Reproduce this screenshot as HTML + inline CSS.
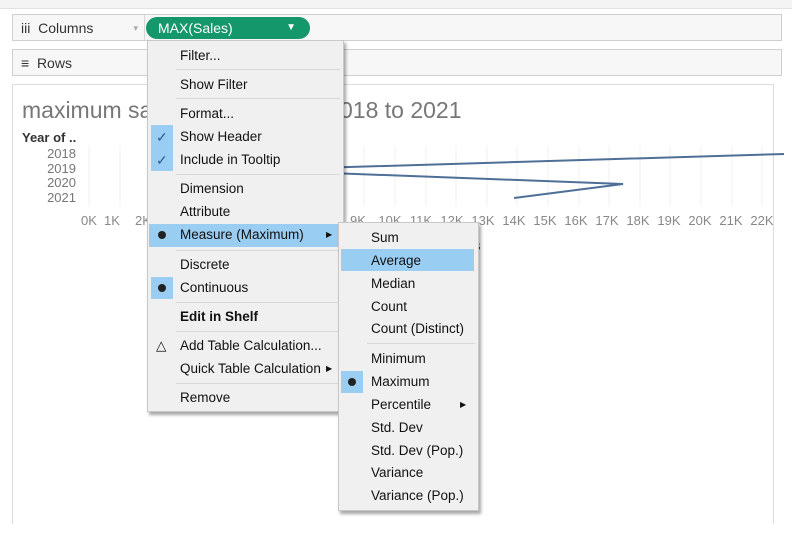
<!DOCTYPE html>
<html><head><style>
body{margin:0;width:792px;height:540px;background:#fff;position:relative;overflow:hidden;font-family:"Liberation Sans",sans-serif;}
.abs{position:absolute}
.shelf{position:absolute;left:12px;width:770px;height:27px;background:#f7f7f7;border:1px solid #cfcfcf;box-sizing:border-box}
.lbl{position:absolute;left:0;top:0;width:132px;height:100%;border-right:1px solid #d8d8d8;font-size:14px;color:#333;line-height:26px;padding-left:8px;box-sizing:border-box}
.menu{position:absolute;background:#f0f0f0;border:1px solid #c8c8c8;box-shadow:2px 3px 3px rgba(0,0,0,.35);font-size:13.5px;color:#111}
.it{position:absolute;left:0;right:0;height:22px;line-height:22px}
.sep{position:absolute;height:1px;background:#d8d8d8}
.ax{position:absolute;top:213px;width:34px;margin-left:-17px;text-align:center;font-size:13px;color:#888}
</style></head><body>
<div class="abs" style="left:0;top:0;width:792px;height:8px;background:#f4f4f4;border-bottom:1px solid #e2e2e2"></div>
<div class="shelf" style="top:14px"><div class="lbl">iii&nbsp; Columns<span style="position:absolute;right:6px;color:#aaa;font-size:9px">▾</span></div></div>
<div class="shelf" style="top:49px"><div class="lbl" style="border-right:none">≡&nbsp; Rows</div></div>
<div class="abs" style="left:146px;top:17px;width:164px;height:22px;border-radius:11px;background:#14976a;color:#fff;font-size:14px;line-height:22px;padding-left:12px;box-sizing:border-box">MAX(Sales)<span style="position:absolute;right:14px;font-size:10px">▼</span></div>
<div class="abs" style="left:12px;top:84px;width:762px;height:440px;border:1px solid #ddd;border-bottom:none;box-sizing:border-box"></div>
<div class="abs" style="left:22px;top:97px;font-size:23px;color:#777;white-space:nowrap">maximum sales</div>
<div class="abs" style="left:340px;top:97px;font-size:23px;color:#777;white-space:nowrap;background:#fff">018 to 2021</div>
<div class="abs" style="left:22px;top:130px;font-size:13px;font-weight:bold;color:#333">Year of ..</div>
<div class="abs" style="left:30px;top:147px;width:46px;text-align:right;font-size:13px;color:#777;line-height:14.7px">2018<br>2019<br>2020<br>2021</div>
<svg class="abs" style="left:0;top:0" width="792" height="540">
<g stroke="#f0f0f0" stroke-width="1">
<path d="M89 146V206M120 146V206M150 146V206M181 146V206M211 146V206M242 146V206M273 146V206M303 146V206M334 146V206M364 146V206M395 146V206M426 146V206M456 146V206M487 146V206M517 146V206M548 146V206M579 146V206M609 146V206M640 146V206M670 146V206M701 146V206M732 146V206M762 146V206"/></g>
<polyline points="784,154 250,170 623,184 514,198" fill="none" stroke="#4e6f96" stroke-width="2"/>
</svg>
<div class="ax" style="left:89px">0K</div><div class="ax" style="left:112px">1K</div><div class="ax" style="left:143px">2K</div>
<div class="ax" style="left:358px">9K</div><div class="ax" style="left:390px">10K</div><div class="ax" style="left:421px">11K</div><div class="ax" style="left:452px">12K</div><div class="ax" style="left:483px">13K</div><div class="ax" style="left:514px">14K</div><div class="ax" style="left:545px">15K</div><div class="ax" style="left:576px">16K</div><div class="ax" style="left:607px">17K</div><div class="ax" style="left:638px">18K</div><div class="ax" style="left:669px">19K</div><div class="ax" style="left:700px">20K</div><div class="ax" style="left:731px">21K</div><div class="ax" style="left:762px">22K</div>
<div class="abs" style="left:474px;top:238px;font-size:13px;color:#333">s</div>

<div class="menu" style="left:147px;top:40px;width:195px;height:370px">
<div class="it" style="top:4px;left:32px">Filter...</div>
<div class="sep" style="top:28px;left:28px;right:3px"></div>
<div class="it" style="top:33px;left:32px">Show Filter</div>
<div class="sep" style="top:57px;left:28px;right:3px"></div>
<div class="abs" style="left:3px;top:84px;width:22px;height:46px;background:#99cdf2"></div>
<div class="it" style="top:62px;left:32px">Format...</div>
<div class="it" style="top:85px;left:32px">Show Header</div>
<div class="abs" style="left:8px;top:85px;line-height:22px;color:#2a5d8c;font-size:14px">✓</div>
<div class="it" style="top:108px;left:32px">Include in Tooltip</div>
<div class="abs" style="left:8px;top:108px;line-height:22px;color:#2a5d8c;font-size:14px">✓</div>
<div class="sep" style="top:133px;left:28px;right:3px"></div>
<div class="it" style="top:137px;left:32px">Dimension</div>
<div class="it" style="top:160px;left:32px">Attribute</div>
<div class="abs" style="left:1px;top:183px;width:192px;height:23px;background:#99cdf2"></div>
<div class="it" style="top:183px;left:32px">Measure (Maximum)</div>
<div class="abs" style="left:10px;top:190px;width:8px;height:8px;border-radius:50%;background:#222"></div>
<div class="abs" style="left:178px;top:183px;line-height:22px;font-size:8px">▶</div>
<div class="sep" style="top:209px;left:28px;right:3px"></div>
<div class="it" style="top:213px;left:32px">Discrete</div>
<div class="abs" style="left:3px;top:236px;width:22px;height:22px;background:#99cdf2"></div>
<div class="abs" style="left:10px;top:243px;width:8px;height:8px;border-radius:50%;background:#222"></div>
<div class="it" style="top:236px;left:32px">Continuous</div>
<div class="sep" style="top:261px;left:28px;right:3px"></div>
<div class="it" style="top:265px;left:32px;font-weight:bold">Edit in Shelf</div>
<div class="sep" style="top:290px;left:28px;right:3px"></div>
<div class="it" style="top:294px;left:8px">△</div>
<div class="it" style="top:294px;left:32px">Add Table Calculation...</div>
<div class="it" style="top:317px;left:32px">Quick Table Calculation</div>
<div class="abs" style="left:178px;top:317px;line-height:22px;font-size:8px">▶</div>
<div class="sep" style="top:342px;left:28px;right:3px"></div>
<div class="it" style="top:346px;left:32px">Remove</div>
</div>

<div class="menu" style="left:338px;top:222px;width:139px;height:287px">
<div class="it" style="top:4px;left:32px">Sum</div>
<div class="abs" style="left:2px;top:26px;width:133px;height:22px;background:#99cdf2"></div>
<div class="it" style="top:27px;left:32px">Average</div>
<div class="it" style="top:50px;left:32px">Median</div>
<div class="it" style="top:73px;left:32px">Count</div>
<div class="it" style="top:95px;left:32px">Count (Distinct)</div>
<div class="sep" style="top:120px;left:28px;right:3px"></div>
<div class="it" style="top:125px;left:32px">Minimum</div>
<div class="abs" style="left:2px;top:148px;width:22px;height:22px;background:#99cdf2"></div>
<div class="abs" style="left:9px;top:155px;width:8px;height:8px;border-radius:50%;background:#222"></div>
<div class="it" style="top:148px;left:32px">Maximum</div>
<div class="it" style="top:171px;left:32px">Percentile</div>
<div class="abs" style="left:121px;top:171px;line-height:22px;font-size:8px">▶</div>
<div class="it" style="top:194px;left:32px">Std. Dev</div>
<div class="it" style="top:217px;left:32px">Std. Dev (Pop.)</div>
<div class="it" style="top:239px;left:32px">Variance</div>
<div class="it" style="top:262px;left:32px">Variance (Pop.)</div>
</div>
</body></html>
